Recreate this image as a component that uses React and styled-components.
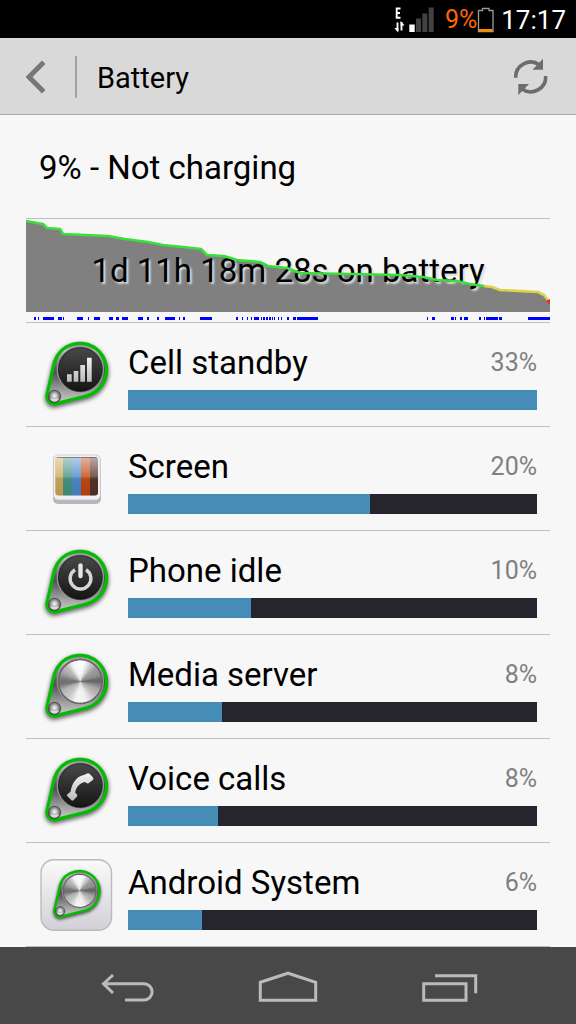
import styled, { createGlobalStyle } from "styled-components";

const apps = [
  { name: "Cell standby", percent: 33, fill: 100, icon: "signal" },
  { name: "Screen", percent: 20, fill: 59.2, icon: "screen" },
  { name: "Phone idle", percent: 10, fill: 30.1, icon: "power" },
  { name: "Media server", percent: 8, fill: 23, icon: "metal" },
  { name: "Voice calls", percent: 8, fill: 22, icon: "phone" },
  { name: "Android System", percent: 6, fill: 18.1, icon: "system" },
];

const greenLine =
  "0,2 17,5 21,9 34,10 37,15 82,17 99,20 122,23 137,26 157,28 175,30 181,36 198,37 211,41 234,43 242,47 261,49 274,54 374,56 397,58 411,61 431,62 444,65 458,67";
const yellowLine = "458,67 466,68 474,71 512,73 518,76 522,81";
const redLine = "522,81 524,84";

// [start, width] of every stretch the phone was awake
const awake = [
  [8, 2], [12, 1], [17, 11], [32, 4], [37, 1], [51, 6], [62, 1], [68, 6],
  [83, 4], [90, 3], [96, 6], [112, 5], [121, 2], [131, 2], [139, 10],
  [153, 1], [157, 2], [174, 12], [210, 2], [216, 1], [221, 1], [225, 1],
  [228, 5], [235, 1], [237, 2], [240, 2], [243, 2], [246, 1], [248, 1],
  [252, 1], [255, 1], [261, 2], [267, 3], [271, 21], [401, 1], [406, 3],
  [425, 3], [429, 1], [434, 2], [438, 4], [453, 2], [458, 1], [460, 12],
  [473, 3], [502, 22],
];

// brushed metal: thin wedges, brightness peaks in two opposite directions
const stops = [
  [0, 110], [20, 165], [45, 195], [70, 240], [100, 245], [125, 200],
  [150, 180], [172, 110], [185, 120], [205, 165], [225, 190], [245, 245],
  [275, 255], [290, 225], [315, 160], [340, 140], [352, 100], [360, 110],
];

const shade = (deg) => {
  const i = stops.findIndex(([d]) => d > deg);
  const [d0, v0] = stops[i - 1];
  const [d1, v1] = stops[i];
  const v = Math.round(v0 + ((v1 - v0) * (deg - d0)) / (d1 - d0));
  return `rgb(${v},${v},${v})`;
};

const wedges = Array.from({ length: 72 }, (_, i) => {
  const a = (i * 5 * Math.PI) / 180;
  const b = ((i * 5 + 8) * Math.PI) / 180;
  const p = (t) => `${40.3 + 21 * Math.cos(t)} ${30.5 + 21 * Math.sin(t)}`;
  return { d: `M40.3 30.5L${p(a)}A21 21 0 0 1 ${p(b)}Z`, color: shade(i * 5) };
});

const outline =
  "M14.4 23A26.7 26.7 0 1 1 47 56.7L15 64.8A7.6 7.6 0 0 1 7 56Z";

const Defs = () => (
  <HiddenSvg aria-hidden="true">
    <defs>
      <linearGradient id="rim" x1="0" y1="0" x2="0" y2="1">
        <stop offset="0" stopColor="#777" />
        <stop offset="0.12" stopColor="#c4c4c4" />
        <stop offset="0.42" stopColor="#555" />
        <stop offset="0.5" stopColor="#555" />
        <stop offset="0.8" stopColor="#a4a4a4" />
        <stop offset="1" stopColor="#ccc" />
      </linearGradient>
      <linearGradient id="face" x1="0" y1="0" x2="0" y2="1">
        <stop offset="0" stopColor="#484848" />
        <stop offset="1" stopColor="#151515" />
      </linearGradient>
      <linearGradient id="glyph" x1="0" y1="0" x2="0" y2="1">
        <stop offset="0" stopColor="#f2f2f2" />
        <stop offset="1" stopColor="#bbb" />
      </linearGradient>
      <linearGradient id="tile" x1="0" y1="0" x2="0" y2="1">
        <stop offset="0" stopColor="#fafafa" />
        <stop offset="1" stopColor="#d2d0d7" />
      </linearGradient>
      <linearGradient id="gloss" x1="0" y1="0" x2="0" y2="1">
        <stop offset="0" stopColor="#fff" stopOpacity="0.6" />
        <stop offset="0.5" stopColor="#fff" stopOpacity="0.2" />
        <stop offset="0.6" stopColor="#000" stopOpacity="0.05" />
        <stop offset="1" stopColor="#000" stopOpacity="0.1" />
      </linearGradient>
      <radialGradient id="bead" cx="0.5" cy="0.45" r="0.6">
        <stop offset="0" stopColor="#fff" />
        <stop offset="0.35" stopColor="#bbb" />
        <stop offset="0.75" stopColor="#666" />
        <stop offset="1" stopColor="#333" />
      </radialGradient>
      <filter id="shadow" x="-20%" y="-20%" width="140%" height="140%">
        <feGaussianBlur stdDeviation="2" />
      </filter>
    </defs>
  </HiddenSvg>
);

const Knob = ({ metal, children, ...rest }) => (
  <g {...rest}>
    <path d={outline} transform="translate(0 2)" stroke="#000" strokeWidth="4" opacity="0.6" filter="url(#shadow)" />
    <path d={outline} fill="url(#rim)" stroke="#00bd00" strokeWidth="3.2" />
    <circle cx="40.3" cy="30.5" r="23.2" fill="#666" stroke="#aaa" strokeWidth="0.8" />
    {metal ? (
      wedges.map((w) => <path key={w.d} d={w.d} fill={w.color} />)
    ) : (
      <circle cx="40.3" cy="30.5" r="21.8" fill="url(#face)" stroke="#111" strokeWidth="0.6" />
    )}
    <circle cx="14.5" cy="57.5" r="6.2" fill="url(#bead)" stroke="#444" strokeWidth="0.8" />
    <path d="M10 59a4.6 4.6 0 0 0 9 0l-4.5 1z" fill="#eee" opacity="0.8" />
    {children}
  </g>
);

const AppIcon = ({ type }) => (
  <IconSvg viewBox="0 0 72 72" aria-hidden="true">
    {type === "signal" && (
      <Knob>
        <path d="M27 35.3h4.7v7.4H27zM33.7 32h4.6v10.7h-4.6zM40.3 26H45v16.7h-4.7zM47 18.7h4.7v24H47z" fill="url(#glyph)" />
      </Knob>
    )}
    {type === "power" && (
      <Knob>
        <path d="M35 22.8A10.4 10.4 0 1 0 46 22.8" fill="none" stroke="#d6d6d6" strokeWidth="3.4" />
        <path d="M40.5 18.5V29" stroke="#e6e6e6" strokeWidth="4.4" strokeLinecap="round" />
      </Knob>
    )}
    {type === "metal" && <Knob metal />}
    {type === "phone" && (
      <Knob>
        <path
          d="M27.2 39.5L30.5 36.8C32 27.5 37.5 20.8 44.5 19.8L47 18.5Q48.5 17.8 50 19.2L53 22.5Q54 24 52.8 25L48.5 28.2Q47.5 28.8 46.5 28L44.8 27C40 28 36.3 31.5 35.2 37.5L37 39.5Q37.8 40.5 37 41.5L33.5 45.3Q32.2 46.3 31.2 45L27.2 41Q26.6 40.2 27.2 39.5Z"
          fill="url(#glyph)"
        />
      </Knob>
    )}
    {type === "screen" && (
      <g transform="translate(0 -1.5)">
        <rect x="13" y="15" width="48" height="47.5" rx="5" fill="#777" opacity="0.5" />
        <rect x="13.4" y="13.4" width="47" height="48" rx="5" fill="#b9b7bd" />
        <rect x="13.4" y="13.4" width="47" height="45" rx="5" fill="#f1eff4" stroke="#c6c4ca" strokeWidth="0.7" />
        <clipPath id="panel">
          <rect x="15.3" y="15.7" width="42.7" height="38.3" rx="3" />
        </clipPath>
        <g clipPath="url(#panel)">
          <path d="M15 15h8v40h-8z" fill="#cba857" />
          <path d="M23 15h9v40h-9z" fill="#469482" />
          <path d="M32 15h9v40h-9z" fill="#4c88cb" />
          <path d="M41 15h9v40h-9z" fill="#c04810" />
          <path d="M50 15h9v40h-9z" fill="#55332a" />
          <path d="M15 15h44v40H15z" fill="url(#gloss)" />
          <path d="M15 16h44" stroke="#422" strokeWidth="1.2" opacity="0.6" />
        </g>
      </g>
    )}
    {type === "system" && (
      <g>
        <rect x="1" y="0.8" width="70.5" height="70.5" rx="13" fill="url(#tile)" stroke="#bbb" strokeWidth="1.4" />
        <Knob metal transform="translate(9.2 8.8) scale(0.755)" />
      </g>
    )}
  </IconSvg>
);

const App = () => {
  return (
    <Phone>
      <GlobalStyle />
      <Defs />
      <StatusBar>
        <svg width="40" height="32" viewBox="0 0 40 32" aria-hidden="true">
          <path d="M6.5 4.5H2.7V13.700H6.500M2.700 9H6" fill="none" stroke="#fff" strokeWidth="1.9" />
          <path d="M3.500 18.500V27M7.500 26.500V18" stroke="#fff" strokeWidth="1.900" />
          <path d="M0.300 24H4.300V28.500zM6.600 17L10.700 21.500H6.600z" fill="#fff" />
          <path d="M15.3 20.5h5.4V28h-5.4z" fill="#fff" />
          <path d="M22 14.5h5V28h-5zM28.3 9.5h5V28h-5zM34.7 3.5h5V28h-5z" fill="#424242" />
        </svg>
        <Level>9%</Level>
        <svg width="18" height="32" viewBox="0 0 18 32" aria-hidden="true">
          <path d="M1.5 27.5V6.5H5.5V4.5H12V6.5H16V27.5Z" fill="none" stroke="#999" strokeWidth="1.3" />
          <path d="M2 25h13.5v3H2z" fill="#f58a07" />
        </svg>
        <Clock>17:17</Clock>
      </StatusBar>
      <Header>
        <IconButton aria-label="Back">
          <svg width="20" height="36" viewBox="0 0 20 36">
            <path d="M17.7 3.3L3 18L17.7 32.7" fill="none" stroke="#777" strokeWidth="5" />
          </svg>
        </IconButton>
        <Divider />
        <Title>Battery</Title>
        <IconButton aria-label="Refresh">
          <svg width="36" height="40" viewBox="0 0 36 40">
            <g fill="none" stroke="#6c6c6c" strokeWidth="3.6">
              <path d="M2.7 20.7A15 15 0 0 1 26.5 8" />
              <path d="M32.7 19A15 15 0 0 1 9 32" />
            </g>
            <path d="M30 1.7V12.7H19.5zM5.3 38V27H16z" fill="#6c6c6c" />
          </svg>
        </IconButton>
      </Header>
      <Content>
        <Summary>9% - Not charging</Summary>
        <Chart>
          <ChartLayer viewBox="0 0 524 103" preserveAspectRatio="none" aria-hidden="true">
            <polygon points={`0,93 ${greenLine} ${yellowLine} ${redLine} 524,93`} fill="#808080" />
            {awake.map(([x, width]) => (
              <rect key={x} x={x} y="98" width={width} height="3" fill="#00f" />
            ))}
          </ChartLayer>
          <Duration>1d 11h 18m 28s on battery</Duration>
          <ChartLayer viewBox="0 0 524 103" preserveAspectRatio="none" aria-hidden="true">
            <g fill="none" strokeWidth="2.6" strokeLinejoin="round">
              <polyline points={greenLine} stroke="#3ae03a" />
              <polyline points={yellowLine} stroke="#dcd444" />
              <polyline points={redLine} stroke="#f22" strokeWidth="4" />
            </g>
          </ChartLayer>
        </Chart>
        <AppList>
          {apps.map((app) => (
            <AppRow key={app.name}>
              <AppIcon type={app.icon} />
              <Details>
                <Labels>
                  <AppName>{app.name}</AppName>
                  <Percent>{app.percent}%</Percent>
                </Labels>
                <Track>
                  <Fill style={{ width: `${app.fill}%` }} />
                </Track>
              </Details>
            </AppRow>
          ))}
        </AppList>
      </Content>
      <NavBar>
        <NavButton aria-label="Back">
          <svg width="60" height="32" viewBox="0 0 60 32">
            <path d="M15 4L5.5 12.7L15 22M6 12.7H46a8 8 0 0 1 0 16.3H27" />
          </svg>
        </NavButton>
        <NavButton aria-label="Home">
          <svg width="60" height="32" viewBox="0 0 60 32">
            <path d="M2.3 11.3L30 2.2L57.7 11.3V29.2H2.3Z" />
          </svg>
        </NavButton>
        <NavButton aria-label="Recent apps">
          <svg width="60" height="32" viewBox="0 0 60 32">
            <path d="M5.7 12.7H48V29.2H5.7ZM17 4.7H57.7V22.3" />
          </svg>
        </NavButton>
      </NavBar>
    </Phone>
  );
};

export default App;

const GlobalStyle = createGlobalStyle`
  * {
    box-sizing: border-box;
  }
  body {
    margin: 0;
    background: #f7f7f7;
    font-family: Roboto, "Liberation Sans", sans-serif;
    color: #000;
  }
  svg {
    display: block;
    flex-shrink: 0;
  }
`;
const Phone = styled.div`
  min-height: 100vh;
  display: flex;
  flex-direction: column;
`;
const HiddenSvg = styled.svg`
  width: 0;
  height: 0;
`;
const StatusBar = styled.div`
  height: 38px;
  padding: 2px 10px 0;
  display: flex;
  align-items: center;
  justify-content: flex-end;
  background: #000;
  color: #fff;
  font-size: 26px;
  line-height: 36px;
`;
const Level = styled.span`
  color: #f60;
  font-size: 25px;
  margin-left: 11px;
`;
const Clock = styled.span`
  margin-left: 6px;
`;
const Header = styled.header`
  height: 77px;
  padding: 2px 25px 0 16px;
  display: flex;
  align-items: center;
  background: #d9d9d9;
  border-bottom: 1px solid #aaa;
`;
const IconButton = styled.button`
  width: 40px;
  height: 60px;
  padding: 0;
  border: 0;
  background: none;
  display: flex;
  align-items: center;
  justify-content: center;
  cursor: pointer;
`;
const Divider = styled.div`
  width: 2px;
  height: 42px;
  margin: 0 20px 0 19px;
  background: #a3a3a3;
`;
const Title = styled.h1`
  flex: 1;
  margin: 0;
  padding-top: 2px;
  font-size: 29px;
  font-weight: 400;
  line-height: 36px;
`;
const Content = styled.main`
  flex: 1;
  padding: 0 26px;
`;
const Summary = styled.h2`
  margin: 0;
  padding: 33px 13px 30px;
  font-size: 33px;
  font-weight: 400;
  line-height: 40px;
`;
const Chart = styled.section`
  display: grid;
  height: 105px;
  border-top: 1px solid #bdbdbd;
  border-bottom: 1px solid #bdbdbd;
  > * {
    grid-area: 1 / 1;
  }
`;
const ChartLayer = styled.svg`
  width: 100%;
  height: 103px;
`;
const Duration = styled.p`
  margin: 0;
  align-self: center;
  text-align: center;
  font-size: 33px;
  line-height: 40px;
  text-shadow: 2px 2px 2px #ddd;
`;
const AppList = styled.ul`
  list-style: none;
  margin: 0;
  padding: 0;
`;
const AppRow = styled.li`
  display: flex;
  align-items: center;
  gap: 16px;
  height: 104px;
  padding: 0 13px 0 14px;
  border-bottom: 1px solid #bdbdbd;
`;
const IconSvg = styled.svg`
  width: 72px;
  height: 72px;
  overflow: visible;
`;
const Details = styled.div`
  flex: 1;
  padding-top: 4px;
`;
const Labels = styled.div`
  display: flex;
  justify-content: space-between;
  align-items: center;
  margin-bottom: 7px;
  line-height: 40px;
`;
const AppName = styled.span`
  font-size: 33px;
`;
const Percent = styled.span`
  font-size: 25px;
  color: #808080;
`;
const Track = styled.div`
  height: 20px;
  background: #26242d;
`;
const Fill = styled.div`
  height: 100%;
  background: #468cb9;
`;
const NavBar = styled.nav`
  height: 77px;
  padding: 0 48px;
  display: flex;
  background: #484849;
`;
const NavButton = styled.button`
  flex: 1;
  padding: 3px 0 0;
  border: 0;
  background: none;
  display: flex;
  align-items: center;
  justify-content: center;
  cursor: pointer;
  path {
    fill: none;
    stroke: #bababa;
    stroke-width: 3;
  }
`;
